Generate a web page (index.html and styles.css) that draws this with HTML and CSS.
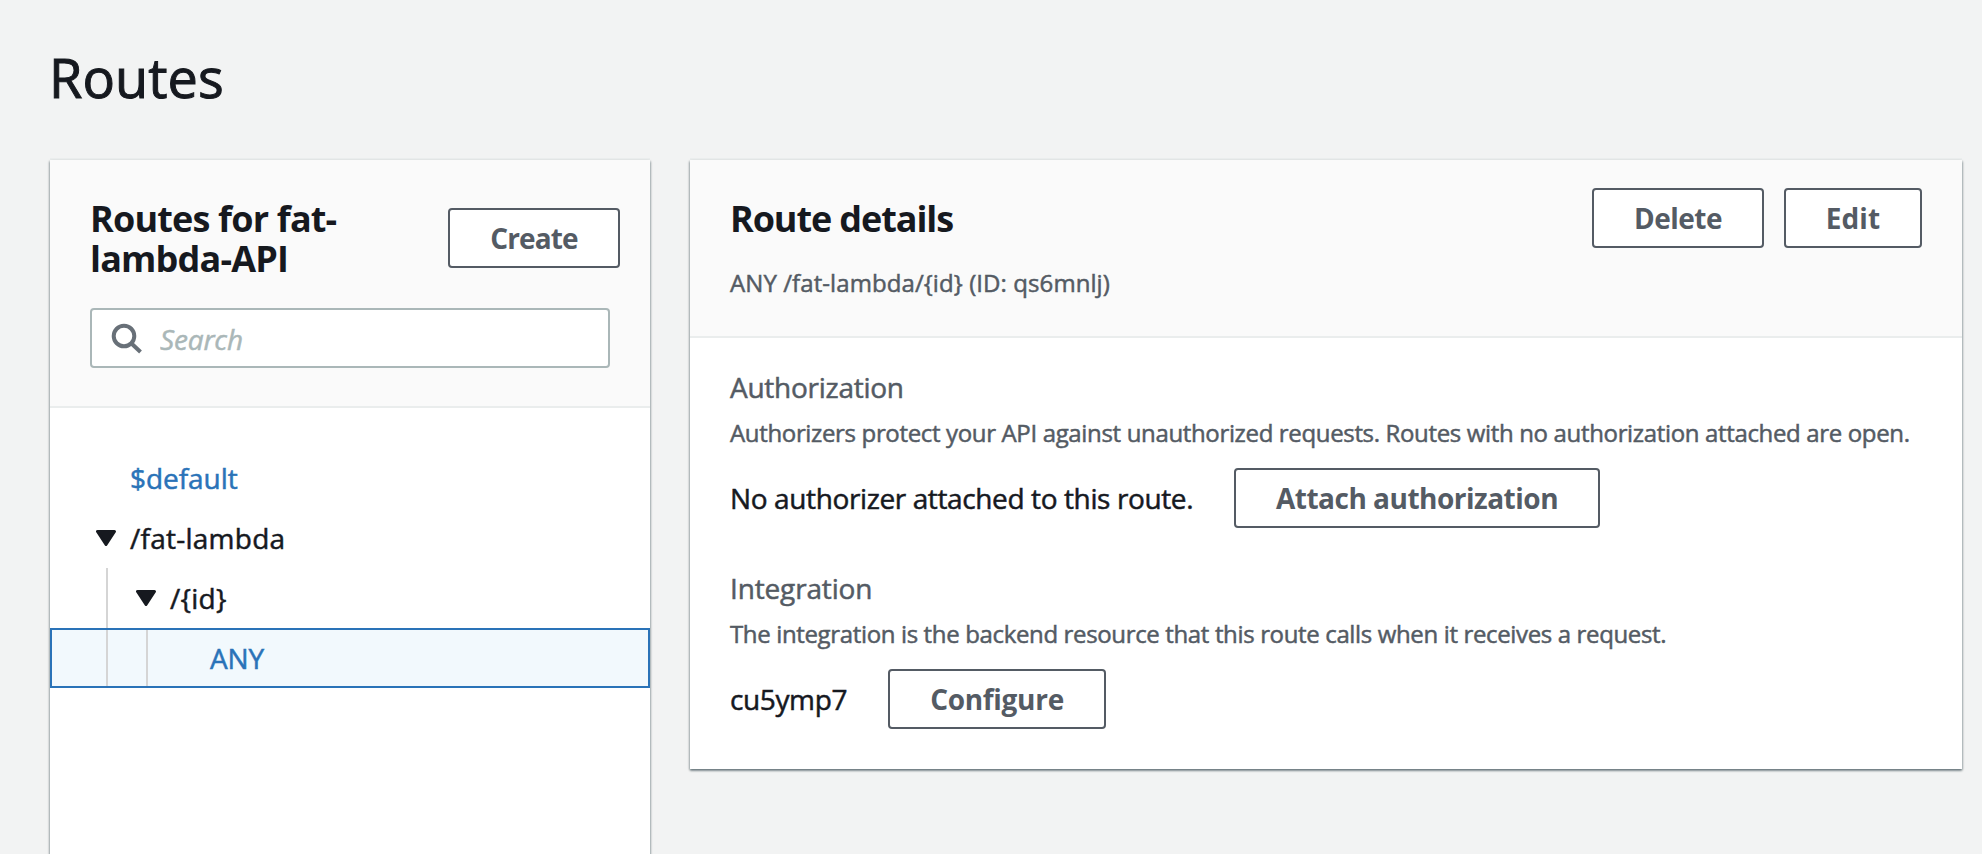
FILE: index.html
```html
<!DOCTYPE html>
<html lang="en">
<head>
<meta charset="utf-8">
<title>Routes</title>
<link rel="stylesheet" href="styles.css">
</head>
<body>
<main class="page">
  <h1 class="page-title">Routes</h1>
  <div class="columns">
    <section class="panel panel-routes">
      <header class="routes-head">
        <div class="routes-bar">
          <h2 class="panel-title">Routes for fat-<br>lambda-API</h2>
          <button class="btn btn-create">Create</button>
        </div>
        <label class="search">
          <svg class="search-icon" viewBox="0 0 32 32" aria-hidden="true"><circle cx="13" cy="13" r="10.3"/><path d="M20.5 20.5 29.5 29"/></svg>
          <input class="search-input" type="text" placeholder="Search">
        </label>
      </header>
      <ul class="tree">
        <li class="row row-default"><a class="link">$default</a></li>
        <li class="row row-l1"><svg class="caret" viewBox="0 0 20 16" aria-hidden="true"><path d="M1.5 1.5h17L10 14.5z"/></svg><span class="wide">/fat-lambda</span></li>
        <li class="row row-l2"><i class="guide"></i><svg class="caret" viewBox="0 0 20 16" aria-hidden="true"><path d="M1.5 1.5h17L10 14.5z"/></svg><span class="wide">/{id}</span></li>
        <li class="row row-selected"><i class="guide"></i><i class="guide"></i><a class="link">ANY</a></li>
      </ul>
    </section>
    <section class="panel panel-details">
      <header class="details-head">
        <div>
          <h2 class="panel-title title-tight">Route details</h2>
          <p class="route-id">ANY /fat-lambda/{id} (ID: qs6mnlj)</p>
        </div>
        <div class="actions">
          <button class="btn btn-delete">Delete</button>
          <button class="btn btn-edit">Edit</button>
        </div>
      </header>
      <div class="details-body">
        <section class="block">
          <h3 class="block-title">Authorization</h3>
          <p class="hint">Authorizers protect your API against unauthorized requests. Routes with no authorization attached are open.</p>
          <div class="block-row"><span class="value">No authorizer attached to this route.</span><button class="btn btn-attach">Attach authorization</button></div>
        </section>
        <section class="block">
          <h3 class="block-title integration">Integration</h3>
          <p class="hint hint-integration">The integration is the backend resource that this route calls when it receives a request.</p>
          <div class="block-row"><span class="value value-id">cu5ymp7</span><button class="btn btn-configure">Configure</button></div>
        </section>
      </div>
    </section>
  </div>
</main>
</body>
</html>
```

FILE: styles.css
```css
* { box-sizing: border-box; }

body {
  margin: 0;
  background: #f2f3f3;
  color: #16191f;
  font: 400 28px/40px "Open Sans", "Noto Sans", sans-serif;
  -webkit-text-stroke: .5px currentColor;
}

h1, h2, h3, p, ul { margin: 0; padding: 0; font-weight: 400; }

.page {
  height: 854px;
  overflow: hidden;
  padding: 41px 20px 0 50px;
}

.page-title {
  height: 119px;
  font-size: 54px;
  line-height: 72px;
  letter-spacing: .1px;
  text-indent: -1px;
  -webkit-text-stroke-width: 1px;
}

.columns {
  display: grid;
  grid-template-columns: 600px 1272px;
  gap: 40px;
  align-items: start;
}

.panel {
  background: #fff;
  box-shadow: 0 2px 2px 0 rgba(0, 28, 36, .35), 1px 1px 2px 0 rgba(0, 28, 36, .22), -1px 1px 2px 0 rgba(0, 28, 36, .22), 0 -2px 0 0 #eaeded;
}

.panel-routes { height: 760px; }

.routes-head {
  height: 248px;
  padding: 39px 30px 0 40px;
  background: #fafafa;
  border-bottom: 2px solid #eaeded;
}

.routes-bar {
  display: flex;
  justify-content: space-between;
  height: 109px;
}

.panel-title {
  font-size: 36px;
  font-weight: 700;
  line-height: 40px;
  letter-spacing: -.82px;
  white-space: nowrap;
  -webkit-text-stroke-width: 0;
}

.title-tight { letter-spacing: -1.1px; }

.btn {
  height: 60px;
  padding: 0;
  border: 2px solid #545b64;
  border-radius: 4px;
  background: #fff;
  color: #545b64;
  font: 700 28px/56px "Open Sans", "Noto Sans", sans-serif;
  letter-spacing: -.2px;
  text-align: center;
  white-space: nowrap;
  -webkit-text-stroke-width: 0;
}

.btn-create { width: 172px; margin: 9px 0 0; letter-spacing: -.9px; }
.btn-delete { width: 172px; letter-spacing: -.5px; }
.btn-edit { width: 138px; letter-spacing: .1px; }
.btn-attach { width: 366px; letter-spacing: -.5px; }
.btn-configure { width: 218px; letter-spacing: -.3px; }

.search {
  display: flex;
  align-items: center;
  width: 520px;
  height: 60px;
  padding-left: 19px;
  background: #fff;
  border: 2px solid #aab7b8;
  border-radius: 4px;
}

.search-icon {
  width: 32px;
  height: 32px;
  margin: 2px 17px 0 0;
  fill: none;
  stroke: #687078;
  stroke-width: 4;
}

.search-input {
  flex: 1;
  min-width: 0;
  height: 54px;
  padding: 2px 0 0;
  border: 0;
  outline: 0;
  background: none;
  font: 400 28px/40px "Open Sans", "Noto Sans", sans-serif;
  letter-spacing: -.15px;
}

.search-input::placeholder {
  color: #aab7b8;
  font-style: italic;
  opacity: 1;
  -webkit-text-stroke: .5px #aab7b8;
}

.tree { padding-top: 40px; list-style: none; }

.row {
  display: flex;
  align-items: center;
  height: 60px;
  padding-bottom: 1px;
}

.row-default { padding-left: 80px; letter-spacing: -.05px; }
.row-l1 { padding-left: 46px; }
.row-l2 { padding-left: 56px; }
.row-selected {
  padding: 0 0 0 54px;
  border: 2px solid #2a73b8;
  background: #f2f9fd;
}

.row-selected .link { margin-left: -38px; padding: 0 0 1px 62px; letter-spacing: -.15px; }

.link { color: #2a73b8; }
.wide { letter-spacing: .25px; }

.guide {
  width: 2px;
  height: 56px;
  margin-right: 38px;
  background: #d5d5d5;
}

.row-l2 .guide { height: 60px; margin: 1px 28px 0 0; }

.caret {
  width: 20px;
  height: 16px;
  margin: 1px 14px 0 0;
  fill: #16191f;
  stroke: #16191f;
  stroke-width: 3;
  stroke-linejoin: round;
}

.details-head {
  display: flex;
  justify-content: space-between;
  height: 178px;
  padding: 39px 40px 0;
  background: #fafafa;
  border-bottom: 2px solid #eaeded;
}

.route-id {
  margin-top: 26px;
  color: #545b64;
  font-size: 24px;
  line-height: 36px;
  letter-spacing: .08px;
}

.actions { display: flex; gap: 20px; margin-top: -11px; }

.details-body { padding: 29px 40px 40px; }

.block + .block { margin-top: 40px; }

.block-title {
  color: #545b64;
  font-size: 28px;
  line-height: 40px;
  letter-spacing: -.26px;
}

.integration { letter-spacing: -.15px; }

.hint {
  margin-top: 8px;
  color: #545b64;
  font-size: 24px;
  line-height: 36px;
  letter-spacing: -.345px;
  white-space: nowrap;
}

.hint-integration { letter-spacing: -.355px; }

.block-row {
  display: flex;
  align-items: center;
  margin-top: 17px;
}

.value { width: 504px; padding-bottom: 1px; letter-spacing: -.38px; white-space: nowrap; }
.value-id { width: 158px; }
```
